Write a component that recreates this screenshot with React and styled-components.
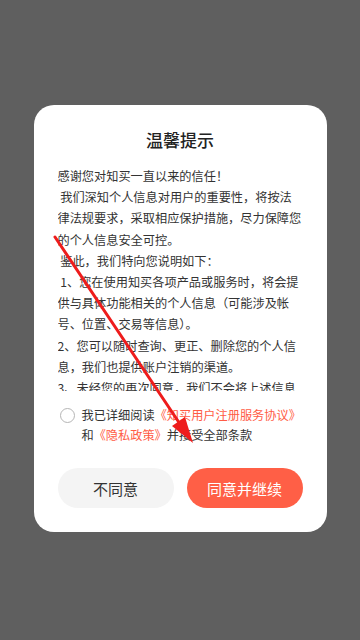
import styled, { createGlobalStyle } from "styled-components";

const GlobalStyle = createGlobalStyle`
  html, body {
    margin: 0;
    padding: 0;
    background: #5f5f5f;
    font-family: "Noto Sans CJK SC", "Noto Sans", sans-serif;
  }
`;

const Overlay = styled.div`
  position: relative;
  width: 360px;
  height: 640px;
  box-sizing: border-box;
  padding-top: 105px;
  display: flex;
  align-items: flex-start;
  justify-content: center;
  background: #5f5f5f;
`;

const Dialog = styled.div`
  width: 293px;
  box-sizing: border-box;
  padding: 23px 0 24px;
  background: #fff;
  border-radius: 20px;
  display: flex;
  flex-direction: column;
`;

const Title = styled.h2`
  margin: 0;
  font-size: 17px;
  font-weight: 500;
  line-height: 24px;
  text-align: center;
  color: #222;
`;

const Content = styled.div`
  margin: 14px 24px 0;
  height: 225px;
  overflow: hidden;
  font-size: 12.2px;
  line-height: 21.2px;
  color: #333;
  white-space: pre-wrap;
`;

const AgreeRow = styled.div`
  margin: 14px 24px 0;
  display: flex;
  align-items: flex-start;
  gap: 7px;
`;

const Radio = styled.span`
  flex: none;
  width: 13px;
  height: 13px;
  margin: 3px 0 0 2px;
  border: 1px solid #b5b5b5;
  border-radius: 50%;
`;

const AgreeText = styled.p`
  margin: 0;
  font-size: 12.2px;
  line-height: 20px;
  color: #333;
  white-space: nowrap;
`;

const Link = styled.span`
  color: #ff5c45;
`;

const Buttons = styled.div`
  margin: 23px 24px 0;
  display: flex;
  justify-content: space-between;
`;

const Button = styled.button`
  width: 116px;
  height: 40px;
  border: 0;
  border-radius: 20px;
  font-family: "Noto Sans CJK SC", "Noto Sans", sans-serif;
  font-size: 15px;
  cursor: pointer;
  background: ${(p) => (p.$primary ? "#ff5f46" : "#f4f4f4")};
  color: ${(p) => (p.$primary ? "#fff" : "#333")};
`;

const Annotation = styled.svg`
  position: absolute;
  left: 0;
  top: 0;
  pointer-events: none;
`;

const policy = `感谢您对知买一直以来的信任！
 我们深知个人信息对用户的重要性，将按法律法规要求，采取相应保护措施，尽力保障您的个人信息安全可控。
 鉴此，我们特向您说明如下：
 1、您在使用知买各项产品或服务时，将会提供与具体功能相关的个人信息（可能涉及帐号、位置、交易等信息）。
2、您可以随时查询、更正、删除您的个人信息，我们也提供账户注销的渠道。
3、未经您的再次同意，我们不会将上述信息用于您未授权的其他用途或目的。`;

export default function App() {
  return (
    <>
      <GlobalStyle />
      <Overlay>
        <Dialog>
          <Title>温馨提示</Title>
          <Content>{policy}</Content>
          <AgreeRow>
            <Radio />
            <AgreeText>
              我已详细阅读<Link>《知买用户注册服务协议》</Link>
              <br />和<Link>《隐私政策》</Link>并接受全部条款
            </AgreeText>
          </AgreeRow>
          <Buttons>
            <Button>不同意</Button>
            <Button $primary>同意并继续</Button>
          </Buttons>
        </Dialog>
        <Annotation width="360" height="640" viewBox="0 0 360 640">
          <line x1="55" y1="237" x2="180" y2="424" stroke="#ee1c1c" strokeWidth="3" strokeLinecap="round" />
          <polygon points="193,443 185,417 172,426" fill="#ee1c1c" />
        </Annotation>
      </Overlay>
    </>
  );
}
